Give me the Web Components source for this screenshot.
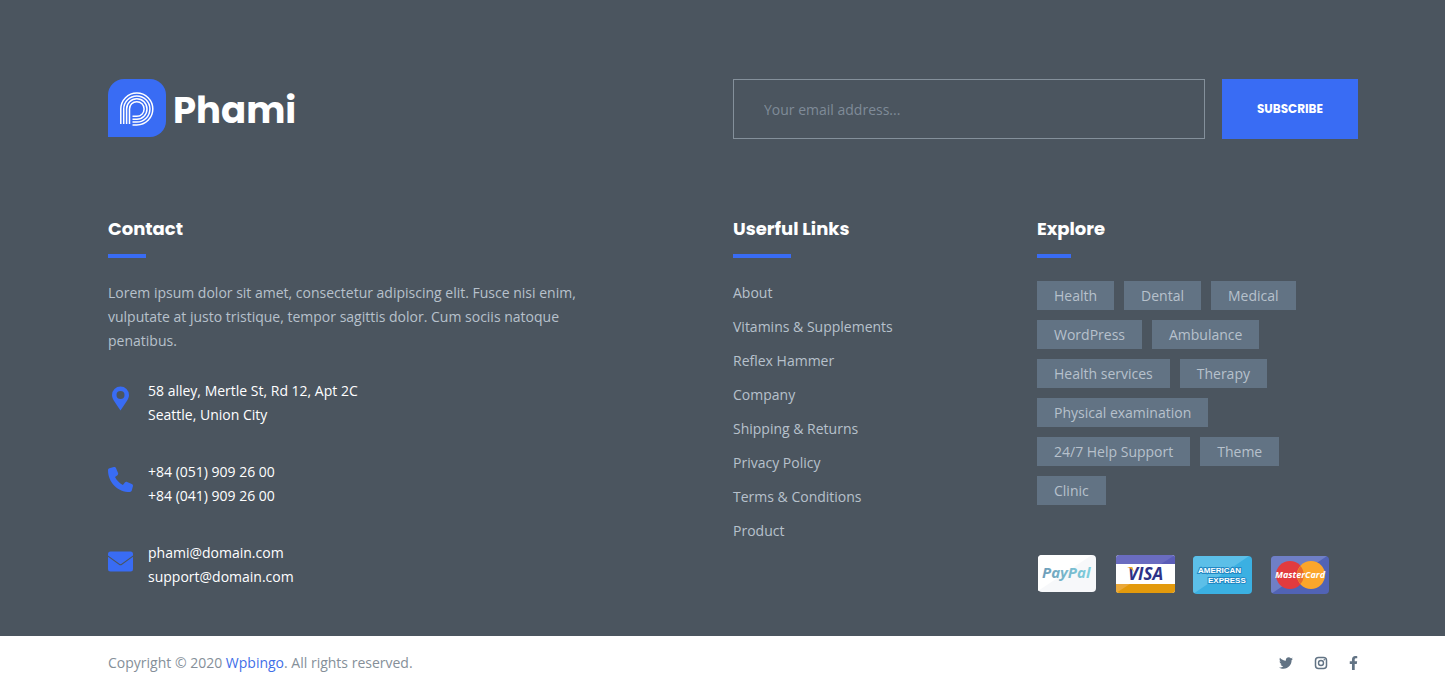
<!DOCTYPE html>
<html lang="en">
<head>
<meta charset="utf-8">
<meta name="viewport" content="width=device-width, initial-scale=1">
<title>Phami</title>
<style>
  :root {
    --slate: #4b555f;
    --blue: #396cf4;
    --muted: #b7c1cc;
    --steel: #627384;
    --gutter-left: 108px;
    --gutter-right: 87px;
    --display: Poppins, Inter, sans-serif;
  }
  body { margin: 0; background: #fff; font: 14px/24px "Open Sans", sans-serif; color: var(--muted); }
</style>
</head>
<body>
<phami-footer></phami-footer>

<template id="t-footer">
  <style>
    :host { display: block; }
    .main { background: var(--slate); padding: 79px var(--gutter-right) 42px var(--gutter-left); }
    .top, .columns { display: grid; grid-template-columns: 625fr 304fr 321fr; }
    .top { margin-bottom: 78px; }
    phami-newsletter { grid-column: 2 / 4; }
    .intro { margin: 0 0 26px; max-width: 480px; }
    .contacts { display: grid; gap: 33px; }
    phami-cards { margin-top: 50px; }
  </style>
  <footer>
    <div class="main">
      <div class="top">
        <phami-logo></phami-logo>
        <phami-newsletter></phami-newsletter>
      </div>
      <div class="columns">
        <footer-column>
          <span slot="title">Contact</span>
          <p class="intro">Lorem ipsum dolor sit amet, consectetur adipiscing elit. Fusce nisi enim, vulputate at justo tristique, tempor sagittis dolor. Cum sociis natoque penatibus.</p>
          <div class="contacts">
            <contact-item icon="pin"><div>58 alley, Mertle St, Rd 12, Apt 2C</div><div>Seattle, Union City</div></contact-item>
            <contact-item icon="phone"><div>+84 (051) 909 26 00</div><div>+84 (041) 909 26 00</div></contact-item>
            <contact-item icon="mail"><div>phami@domain.com</div><div>support@domain.com</div></contact-item>
          </div>
        </footer-column>
        <footer-column>
          <span slot="title">Userful Links</span>
          <link-list></link-list>
        </footer-column>
        <footer-column>
          <span slot="title">Explore</span>
          <tag-cloud></tag-cloud>
          <phami-cards></phami-cards>
        </footer-column>
      </div>
    </div>
    <copyright-bar></copyright-bar>
  </footer>
</template>

<template id="t-logo">
  <style>
    :host { display: flex; align-items: flex-start; }
    a { display: flex; align-items: center; gap: 7px; color: #fff; text-decoration: none; }
    svg { display: block; width: 58px; height: 58px; }
    span { font: 700 37px/54px var(--display); padding-top: 4px; }
  </style>
  <a href="#">
    <svg viewBox="0 0 58 58" aria-hidden="true">
      <path fill="#396cf4" d="M0 58V16A16 16 0 0 1 16 0H42A16 16 0 0 1 58 16V42A16 16 0 0 1 42 58Z"/>
      <g fill="none" stroke="#fff" stroke-width="1.5">
        <path d="M12.800 45V30A16 16 0 1 1 28.800 46H24.500"/>
        <path d="M15.700 45V30A13.100 13.100 0 1 1 28.800 43.100H24.500"/>
        <path d="M18.600 45V30A10.200 10.200 0 1 1 28.800 40.200H24.500"/>
        <path d="M21.500 45V30A7.300 7.300 0 1 1 28.800 37.300H24.500"/>
      </g>
    </svg>
    <span>Phami</span>
  </a>
</template>

<template id="t-newsletter">
  <style>
    :host { display: block; }
    form { display: flex; gap: 17px; margin: 0; }
    input { flex: 1; min-width: 0; height: 60px; box-sizing: border-box; padding: 0 30px; border: 1px solid #84909b; border-radius: 0; background: transparent; color: #fff; font: 14px/24px "Open Sans", sans-serif; outline: 0; }
    input::placeholder { color: #7f8b98; opacity: 1; }
    button { width: 136px; height: 60px; padding: 0; border: 0; background: var(--blue); color: #fff; font: 700 12px/24px var(--display); text-transform: uppercase; }
  </style>
  <form>
    <input type="email" aria-label="Your email address" placeholder="Your email address...">
    <button type="button">Subscribe</button>
  </form>
</template>

<template id="t-column">
  <style>
    :host { display: block; min-width: 0; }
    h2 { display: table; margin: 0 0 23px; font: 700 18px/24px var(--display); color: #fff; }
    h2::after { content: ""; display: block; width: 50%; height: 4px; margin-top: 13px; background: var(--blue); }
  </style>
  <h2><slot name="title"></slot></h2>
  <slot></slot>
</template>

<template id="t-contact">
  <style>
    :host { display: grid; grid-template-columns: 25px 1fr; column-gap: 15px; color: #fff; }
    .icon { padding-top: 7px; fill: var(--blue); }
    svg { display: block; width: 25px; height: 25px; }
    .text { white-space: nowrap; }
  </style>
  <div class="icon"></div>
  <div class="text"><slot></slot></div>
</template>

<template id="t-links">
  <style>
    :host { display: block; }
    ul { display: grid; gap: 10px; margin: 0; padding: 0; list-style: none; }
    a { color: inherit; text-decoration: none; }
  </style>
  <ul></ul>
</template>

<template id="t-tags">
  <style>
    :host { display: block; }
    nav { display: flex; flex-wrap: wrap; gap: 10px; max-width: 270px; }
    a { padding: 0 17px; line-height: 29px; background: var(--steel); color: inherit; text-decoration: none; white-space: nowrap; }
  </style>
  <nav aria-label="Explore"></nav>
</template>

<template id="t-cards">
  <style>
    :host { display: block; }
    svg { display: block; width: 292px; height: 39px; }
    text { font-family: "Open Sans", sans-serif; font-weight: 700; font-style: italic; }
    .amex text { font-family: "Liberation Sans", sans-serif; font-style: normal; }
  </style>
  <svg viewBox="0 0 292 39" role="img" aria-label="Accepted cards">
    <defs>
      <linearGradient id="pp" x1="0" x2="1"><stop offset="0" stop-color="#6f9db9"/><stop offset="1" stop-color="#7fd0de"/></linearGradient>
      <clipPath id="cv"><rect x="79" width="59" height="38" rx="3"/></clipPath>
      <clipPath id="ca"><rect x="156" y="1" width="59" height="38" rx="4"/></clipPath>
      <clipPath id="cm"><rect x="234" y="1" width="58" height="38" rx="4"/></clipPath>
    </defs>
    <rect x="1" width="58" height="37" rx="4" fill="#f7f8fa"/>
    <path d="M5 0H55L1 36V4A4 4 0 0 1 5 0Z" fill="#fff"/>
    <text x="5" y="23" font-size="15" fill="url(#pp)">PayPal</text>
    <g clip-path="url(#cv)">
      <rect x="79" width="59" height="38" fill="#fff"/>
      <rect x="79" width="59" height="9" fill="#6a6cc0"/>
      <rect x="79" y="29" width="59" height="9" fill="#e39a0c"/>
      <path d="M79 29H93L79 38Z" fill="#eba93a"/>
      <path d="M138 0V9H124Z" fill="#5a5db8"/>
    </g>
    <text x="91" y="25" font-size="17" fill="#2d3288">VISA</text>
    <path d="M90 12H95L98 19C96 15 94 13 90 12Z" fill="#eba524"/>
    <g clip-path="url(#ca)">
      <rect x="156" y="1" width="59" height="38" fill="#3bb0e2"/>
      <path d="M156 1H212L156 39Z" fill="#5cbfe8"/>
    </g>
    <g class="amex" fill="#fff" stroke="#2188c4" stroke-width="2" paint-order="stroke" font-size="8">
      <text x="161" y="18">AMERICAN</text>
      <text x="171" y="28">EXPRESS</text>
    </g>
    <g clip-path="url(#cm)">
      <rect x="234" y="1" width="58" height="38" fill="#5163b5"/>
      <path d="M234 1H290L234 39Z" fill="#6f7fc6"/>
      <circle cx="253" cy="20" r="14" fill="#e23b3e"/>
      <circle cx="274" cy="20" r="14" fill="#fba62b"/>
      <path d="M263.500 11A14 14 0 0 1 263.500 29A14 14 0 0 1 263.500 11Z" fill="#e76b2e"/>
    </g>
    <text x="238" y="23" font-size="9" fill="#fff">MasterCard</text>
  </svg>
</template>

<template id="t-copyright">
  <style>
    :host { display: flex; justify-content: space-between; align-items: center; height: 54px; padding: 0 var(--gutter-right) 0 var(--gutter-left); background: #fff; color: #858f99; }
    a { color: #3f6fe8; text-decoration: none; }
    .social { display: flex; gap: 21px; fill: var(--steel); }
    .social a { display: block; }
    svg { display: block; height: 14px; }
  </style>
  <div>Copyright © 2020 <a href="#">Wpbingo</a>. All rights reserved.</div>
  <div class="social">
    <a href="#" aria-label="Twitter"><svg width="14" viewBox="0 0 512 512"><path d="M459.4 151.7c.3 4.5.3 9.1.3 13.6 0 138.7-105.6 298.6-298.6 298.6-59.5 0-114.7-17.2-161.1-47.1 8.4 1 16.6 1.3 25.3 1.3 49.1 0 94.2-16.6 130.3-44.8-46.1-1-84.8-31.2-98.1-72.8 6.5 1 13 1.6 19.8 1.6 9.4 0 18.8-1.3 27.6-3.6-48.1-9.7-84.1-52-84.1-103v-1.3c14 7.8 30.2 12.7 47.4 13.3-28.3-18.8-46.8-51-46.8-87.4 0-19.5 5.2-37.4 14.3-53C87.4 130.8 165 172.4 252.1 176.9c-1.6-7.8-2.6-15.9-2.6-24C249.5 95.1 296.3 48 354.4 48c30.2 0 57.5 12.7 76.7 33.1 23.7-4.5 46.5-13.3 66.6-25.3-7.8 24.4-24.4 44.8-46.1 57.8 21.1-2.3 41.6-8.1 60.4-16.2-14.3 20.8-32.2 39.3-52.6 54.3z"/></svg></a>
    <a href="#" aria-label="Instagram"><svg width="14" viewBox="0 0 14 14"><rect x="1.5" y="1.5" width="11" height="11" rx="3" fill="none" stroke="#627384" stroke-width="1.5"/><circle cx="7" cy="7" r="2.5" fill="none" stroke="#627384" stroke-width="1.4"/><circle cx="10.3" cy="3.8" r=".8"/></svg></a>
    <a href="#" aria-label="Facebook"><svg width="9" viewBox="0 0 320 512"><path d="M279.1 288l14.3-92.7h-89v-60.1c0-25.4 12.4-50.1 52.2-50.1H297V6.3S260.4 0 225.400 0c-73.2 0-121 44.4-121 124.700v70.600H23V288h81.400v224h100.200V288z"/></svg></a>
  </div>
</template>

<script>
  const define = (name, templateId, setup) => {
    customElements.define(name, class extends HTMLElement {
      connectedCallback() {
        if (this.shadowRoot) return;
        const root = this.attachShadow({ mode: "open" });
        root.append(document.getElementById(templateId).content.cloneNode(true));
        if (setup) setup(this, root);
      }
    });
  };

  const icons = {
    pin: '<svg viewBox="0 0 25 25"><path fill-rule="evenodd" d="M12.5 0.5A8.5 8.5 0 0 0 4 9C4 12.5 6 15 12.5 24.5C19 15 21 12.5 21 9A8.5 8.5 0 0 0 12.5 0.5ZM12.5 5A4 4 0 1 1 12.5 13A4 4 0 1 1 12.5 5Z"/></svg>',
    phone: '<svg viewBox="0 0 512 512"><path d="M164.9 24.6c-7.7-18.6-28-28.5-47.4-23.2l-88 24C12.1 30.2 0 46 0 64c0 247.4 200.6 448 448 448 18 0 33.800-12.100 38.600-29.500l24-88c5.300-19.400-4.600-39.700-23.200-47.400l-96-40c-16.300-6.800-35.200-2.100-46.300 11.600L304.700 368C234.300 334.700 177.300 277.700 144 207.300l49.300-40.300c13.700-11.200 18.400-30 11.600-46.300l-40-96z"/></svg>',
    mail: '<svg viewBox="0 0 25 25"><path d="M2.500 3.500H22.500A2.500 2.500 0 0 1 25 6V7.500L13.500 15.800Q12.500 16.500 11.500 15.800L0 7.500V6A2.500 2.500 0 0 1 2.500 3.500Z"/><path d="M0 8.700L11 16.700Q12.500 17.700 14 16.700L25 8.700V21A2.500 2.500 0 0 1 22.500 23.500H2.500A2.500 2.500 0 0 1 0 21Z"/></svg>'
  };

  const makeLink = (label) => {
    const a = document.createElement("a");
    a.href = "#";
    a.textContent = label;
    return a;
  };

  define("phami-logo", "t-logo");
  define("phami-newsletter", "t-newsletter");
  define("footer-column", "t-column");
  define("contact-item", "t-contact", (host, root) => {
    root.querySelector(".icon").innerHTML = icons[host.getAttribute("icon")];
  });
  define("link-list", "t-links", (host, root) => {
    const list = root.querySelector("ul");
    for (const label of ["About", "Vitamins & Supplements", "Reflex Hammer", "Company", "Shipping & Returns", "Privacy Policy", "Terms & Conditions", "Product"]) {
      const li = document.createElement("li");
      li.append(makeLink(label));
      list.append(li);
    }
  });
  define("tag-cloud", "t-tags", (host, root) => {
    root.querySelector("nav").append(...["Health", "Dental", "Medical", "WordPress", "Ambulance", "Health services", "Therapy", "Physical examination", "24/7 Help Support", "Theme", "Clinic"].map(makeLink));
  });
  define("phami-cards", "t-cards");
  define("copyright-bar", "t-copyright");
  define("phami-footer", "t-footer");
</script>
</body>
</html>
